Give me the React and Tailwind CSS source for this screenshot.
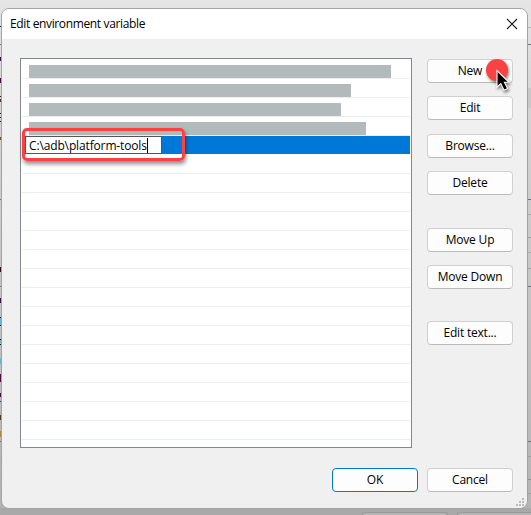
import { useState } from "react";
import { clsx } from "clsx";

// Length of every hidden entry in the list
const maskedEntries = ["w-[362px]", "w-[322px]", "w-[312px]", "w-[337px]"];

const emptyRows = Array.from({ length: 15 });

const actions = [
  { name: "New", className: "" },
  { name: "Edit", className: "mt-[13px]" },
  { name: "Browse...", className: "mt-[14px]" },
  { name: "Delete", className: "mt-[13px]" },
  { name: "Move Up", className: "mt-[33px]" },
  { name: "Move Down", className: "mt-[13px]" },
  { name: "Edit text...", className: "mt-8" },
];

// y, height and colour of the window parts that stick out on the left
const leftMarks = [
  [26, 1, "#1b1b6b"],
  [44, 1, "#777777"],
  [57, 4, "#3a0a55"],
  [78, 5, "#500a35"],
  [96, 1, "#222222"],
  [99, 3, "#4a3a20"],
  [113, 1, "#222222"],
  [117, 1, "#222222"],
  [121, 1, "#222222"],
  [137, 3, "#8a4a20"],
  [199, 1, "#777777"],
  [267, 5, "#3a0a20"],
  [286, 1, "#777777"],
  [298, 5, "#3a0a55"],
  [317, 1, "#111111"],
  [318, 7, "#64b4dc"],
  [325, 1, "#111111"],
  [339, 1, "#111111"],
  [340, 3, "#64b4dc"],
  [344, 1, "#111111"],
  [358, 6, "#64b4dc"],
  [374, 8, "#50083a"],
  [393, 4, "#500a35"],
  [401, 1, "#1b4b6b"],
  [415, 5, "#4a3a20"],
  [431, 6, "#b08040"],
  [441, 1, "#777777"],
];

const rightMarks = [
  [27, 1, "#b5b5b5"],
  [44, 1, "#6d7280"],
  [88, 20, "#c8c8c8"],
  [199, 1, "#6d7280"],
  [214, 1, "#a8a8a8"],
  [237, 1, "#a0a0a0"],
  [252, 1, "#aaaaaa"],
  [268, 1, "#a5a5a5"],
  [286, 1, "#6d7280"],
  [441, 1, "#6d7280"],
  [456, 1, "#a0a0a0"],
  [479, 1, "#909090"],
  [493, 1, "#a0a0a0"],
];

const Backdrop = () => (
  <svg className="absolute inset-0" width="531" height="515" shapeRendering="crispEdges">
    <defs>
      <linearGradient id="shade" x1="0" y1="0" x2="0" y2="1">
        <stop offset="0" stopColor="#e5e5e5" />
        <stop offset="0.2" stopColor="#d5d5d5" />
        <stop offset="0.6" stopColor="#c4c4c4" />
        <stop offset="0.98" stopColor="#b4b4b4" />
        <stop offset="1" stopColor="#b0b0b0" />
      </linearGradient>
    </defs>
    <rect width="531" height="515" fill="url(#shade)" />
    <rect y="508" width="531" height="7" fill="#a9a9a9" />
    {leftMarks.map(([y, height, fill]) => (
      <rect key={y} y={y} width="2" height={height} fill={fill} />
    ))}
    {rightMarks.map(([y, height, fill]) => (
      <rect key={y} x="528" y={y} width="3" height={height} fill={fill} />
    ))}
    <rect x="362.5" y="512.5" width="85" height="22" rx="3" fill="#b4b4b4" stroke="#999999" />
    <rect x="457.5" y="512.5" width="85" height="22" rx="3" fill="#b4b4b4" stroke="#999999" />
  </svg>
);

const DialogButton = ({ children, primary, className }) => (
  <button
    type="button"
    className={clsx(
      "flex h-6 w-[86px] shrink-0 items-center justify-center rounded-[4px] border bg-[#fdfdfd] pb-px tracking-[-0.2px]",
      primary ? "border-[#0078d4]" : "border-[#d0d0d0] border-b-[#bababa]",
      className
    )}
  >
    {children}
  </button>
);

const SizeGrip = () => (
  <svg className="absolute right-[3px] bottom-0.5" width="8" height="8" fill="#bcbcbc" shapeRendering="crispEdges">
    <path d="M6 0h2v2h-2zM3 3h2v2h-2zM6 3h2v2h-2zM0 6h2v2h-2zM3 6h2v2h-2zM6 6h2v2h-2z" />
  </svg>
);

const App = () => {
  const [value, setValue] = useState("C:\\adb\\platform-tools");

  return (
    <div className="relative h-[515px] w-[531px] overflow-hidden font-['Open_Sans','Noto_Sans',sans-serif] text-[12px] leading-4 text-black">
      <Backdrop />

      <div className="relative mt-2 ml-px flex h-[501px] w-[527px] flex-col overflow-hidden rounded-lg border border-[#a3a3a3] bg-[#f0f0f0]">
        {/* Title bar */}
        <header className="flex h-[30px] shrink-0 items-center justify-between bg-white pr-[9px] pl-2">
          <h1 className="tracking-[-0.36px]">Edit environment variable</h1>
          <button type="button" aria-label="Close" className="-mt-px">
            <svg width="12" height="12" viewBox="0 0 12 12" fill="none" stroke="#1a1a1a" strokeWidth="1.1">
              <path d="M1 1l10 10M11 1L1 11" />
            </svg>
          </button>
        </header>

        <div className="flex pt-[19px] pl-[18px]">
          {/* Entries */}
          <div className="relative h-[390px] w-[392px] border border-[#828790] bg-white px-px">
            <div className="h-full overflow-hidden">
              {maskedEntries.map((width) => (
                <div key={width} className="flex h-[19px] items-end border-b border-[#ededed] pl-[7px] first:h-5">
                  <div className={clsx("h-[13px] bg-[#b2babb]", width)} />
                </div>
              ))}
              <div className="mb-px flex h-[18px] bg-[#0078d7] pl-[3px]">
                <div className="flex w-[137px] items-center border border-[#555555] bg-white pl-[3px]">
                  <input
                    value={value}
                    onChange={(e) => setValue(e.target.value)}
                    className="h-4 w-[118px] pt-0.5 tracking-[-0.14px] outline-none"
                  />
                  <span className="h-[15px] w-px shrink-0 bg-black" />
                </div>
              </div>
              {emptyRows.map((_, i) => (
                <div key={i} className="h-[19px] border-b border-[#ededed]" />
              ))}
            </div>
            {/* Highlight frame */}
            <div className="absolute top-[69px] left-px h-[33px] w-[163px] rounded-[5px] border-3 border-[#fb4141] shadow-[1px_3px_4px_rgba(0,0,0,0.45)]" />
          </div>

          {/* Actions */}
          <div className="relative ml-[15px] flex flex-col pt-px">
            {actions.map(({ name, className }) => (
              <DialogButton key={name} className={className}>
                {name}
              </DialogButton>
            ))}
            <svg className="absolute top-0 left-[56px] drop-shadow-[1px_2px_1.5px_rgba(0,0,0,0.5)]" width="32" height="36">
              <circle cx="14" cy="12" r="11" fill="#fb4141" />
              <path
                d="M14 12.5V29l3.8-3.4 3.2 6.6 3.6-1.7-3.2-6.2H26z"
                fill="#000"
                stroke="#fff"
                strokeWidth="1.1"
              />
            </svg>
          </div>
        </div>

        {/* Footer */}
        <footer className="mt-5 flex gap-[9px] pl-[330px]">
          <DialogButton primary>OK</DialogButton>
          <DialogButton>Cancel</DialogButton>
        </footer>
        <SizeGrip />
      </div>
    </div>
  );
};

export default App;
